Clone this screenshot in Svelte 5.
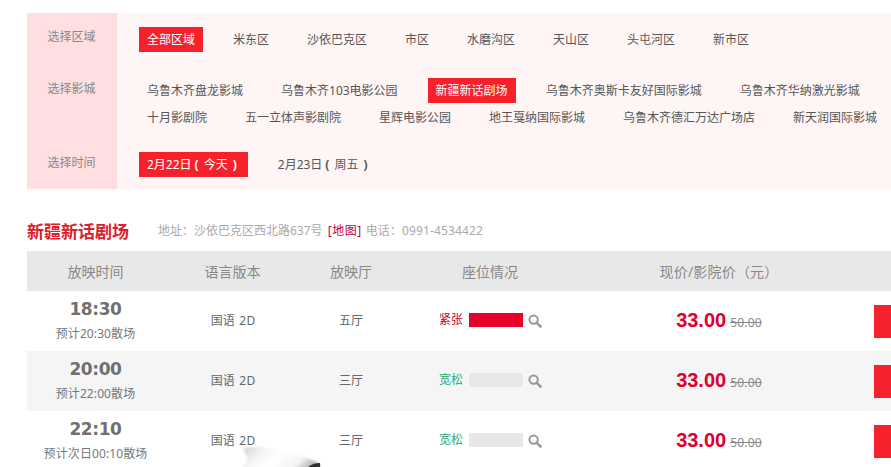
<script>
	const filters = [
		{
			label: "选择区域",
			items: ["全部区域", "米东区", "沙依巴克区", "市区", "水磨沟区", "天山区", "头屯河区", "新市区"],
			active: 0
		},
		{
			label: "选择影城",
			items: [
				"乌鲁木齐盘龙影城",
				"乌鲁木齐103电影公园",
				"新疆新话剧场",
				"乌鲁木齐奥斯卡友好国际影城",
				"乌鲁木齐华纳激光影城",
				"十月影剧院",
				"五一立体声影剧院",
				"星辉电影公园",
				"地王戛纳国际影城",
				"乌鲁木齐德汇万达广场店",
				"新天润国际影城"
			],
			active: 2
		}
	];

	const dates = [
		{ date: "2月22日", day: "今天" },
		{ date: "2月23日", day: "周五" }
	];

	const shows = [
		{ time: "18:30", end: "预计20:30散场", hall: "五厅", busy: true },
		{ time: "20:00", end: "预计22:00散场", hall: "三厅", busy: false },
		{ time: "22:10", end: "预计次日00:10散场", hall: "三厅", busy: false }
	];
</script>

<div class="page">
	<section class="filter">
		{#each filters as group}
			<div class="group">
				<div class="label">{group.label}</div>
				<ul class="items">
					{#each group.items as item, i}
						<li class:active={i === group.active}>{item}</li>
					{/each}
				</ul>
			</div>
		{/each}
		<div class="group">
			<div class="label">选择时间</div>
			<ul class="items">
				{#each dates as d, i}
					<li class="date" class:active={i === 0}>{d.date}<b class="open">(</b>{d.day}<b class="close">)</b></li>
				{/each}
			</ul>
		</div>
	</section>

	<header class="cinema">
		<h2>新疆新话剧场</h2>
		<p>地址：沙依巴克区西北路637号 <a href="#map">[地图]</a> <span class="tel">电话：0991-4534422</span></p>
	</header>

	<div class="table">
		<div class="row head">
			<div>放映时间</div>
			<div>语言版本</div>
			<div>放映厅</div>
			<div>座位情况</div>
			<div class="price-head">现价/影院价（元）</div>
			<div></div>
		</div>
		{#each shows as show}
			<div class="row">
				<div class="time">
					<strong>{show.time}</strong>
					<span>{show.end}</span>
				</div>
				<div class="lang">国语 2D</div>
				<div class="hall">{show.hall}</div>
				<div class="seats">
					<span class="state" class:busy={show.busy}>{show.busy ? "紧张" : "宽松"}</span>
					<span class="bar" class:busy={show.busy}></span>
					<svg width="14" height="14" viewBox="0 0 14 14" aria-hidden="true">
						<circle cx="5.6" cy="5.6" r="4.2" fill="none" stroke="#999" stroke-width="2" />
						<path d="M8.8 8.8 L12.6 12.6" stroke="#999" stroke-width="2.6" stroke-linecap="round" />
					</svg>
				</div>
				<div class="price">
					<b>33.00</b>
					<s>50.00</s>
				</div>
				<div class="buy"><span></span></div>
			</div>
		{/each}
	</div>

	<svg class="mascot" width="84" height="24" viewBox="0 0 84 24" aria-hidden="true">
		<defs>
			<linearGradient id="shade" x1="0" y1="0.3" x2="1" y2="0.6">
				<stop offset="0" stop-color="#d8d8d8" />
				<stop offset="0.22" stop-color="#f4f4f4" />
				<stop offset="0.45" stop-color="#ffffff" />
				<stop offset="0.78" stop-color="#f4f4f4" />
				<stop offset="1" stop-color="#a8a8a8" />
			</linearGradient>
			<filter id="soft" x="-5%" y="-20%" width="110%" height="140%">
				<feGaussianBlur stdDeviation="1" />
			</filter>
		</defs>
		<path d="M5 3 C12 1 26 2 38 5 C54 8 70 12 82 19 L82 24 L3 24 C7 20 10 16 9 13 C8 9 6 7 5 3 Z" fill="url(#shade)" filter="url(#soft)" />
		<path d="M69 23 C72 20 77 18 82 18 L82 24 L69 24 Z" fill="#2e2e2e" />
	</svg>
</div>

<style>
	:global(body) {
		margin: 0;
	}

	.page {
		position: relative;
		width: 891px;
		height: 467px;
		overflow: hidden;
		background: #fff;
		font-family: "Noto Sans", "Noto Sans CJK SC", sans-serif;
		font-size: 12px;
		color: #555;
	}

	.filter {
		margin: 13px 0 0 27px;
		background: #fff5f5;
	}

	.group {
		display: flex;
	}

	.group:nth-child(1) {
		height: 52px;
	}

	.group:nth-child(2) {
		height: 74px;
	}

	.group:nth-child(3) {
		height: 50px;
	}

	.label {
		width: 89px;
		flex: none;
		padding: 11px 1px 0 0;
		line-height: 25px;
		text-align: center;
		background: #ffdfdf;
		color: #888;
	}

	.items {
		display: flex;
		flex-wrap: wrap;
		align-content: flex-start;
		gap: 2px 22px;
		width: 752px;
		margin: 0;
		padding: 14px 0 0 22px;
		list-style: none;
	}

	.group:nth-child(n + 2) .items {
		padding-top: 13px;
	}

	.items li {
		padding: 0 8px;
		line-height: 25px;
		height: 25px;
		white-space: nowrap;
	}

	.items li.date {
		padding-right: 11px;
	}

	.date .open {
		margin: 0 5px 0 3px;
	}

	.date .close {
		margin-left: 5px;
	}

	.items li.active {
		background: #f5222d;
		color: #fff;
	}

	.cinema {
		display: flex;
		align-items: center;
		height: 34px;
		margin: 24px 0 0 27px;
	}

	.cinema h2 {
		width: 131px;
		margin: 0;
		font-size: 17px;
		font-weight: 700;
		color: #d9202c;
	}

	.cinema p {
		margin: 0;
		color: #aaa;
	}

	.cinema a {
		margin: 0 1px 0 2px;
		letter-spacing: 0.5px;
		color: #c4003a;
		text-decoration: none;
	}

	.tel {
		letter-spacing: 0.12px;
	}

	.table {
		margin: 4px 0 0 27px;
		width: 1000px;
	}

	.row {
		display: grid;
		grid-template-columns: 137px 137px 100px 178px 274px 1fr;
		align-items: center;
		height: 60px;
		text-align: center;
		color: #666;
	}

	.row:nth-child(odd) {
		background: #f5f5f5;
	}

	.row.head,
	.row.head:nth-child(odd) {
		height: 40px;
		background: #e8e8e8;
		font-size: 14px;
		color: #888;
	}

	.price-head {
		padding-left: 6px;
		letter-spacing: 0.2px;
	}

	.time {
		display: flex;
		flex-direction: column;
		gap: 4px;
		color: #777;
	}

	.time strong {
		font-family: "DejaVu Sans", sans-serif;
		font-size: 17px;
		line-height: 22px;
		letter-spacing: -0.4px;
		color: #707070;
	}

	.time span {
		line-height: 20px;
		letter-spacing: 0.1px;
	}

	.lang {
		padding: 0 0 2px 1px;
		word-spacing: 1px;
		letter-spacing: 0.2px;
	}

	.hall {
		padding-bottom: 2px;
	}

	.seats {
		display: flex;
		align-items: center;
		padding-left: 38px;
	}

	.state {
		width: 30px;
		text-align: left;
		color: #2aa876;
		transform: translateY(-2px);
	}

	.state.busy {
		color: #c00033;
	}

	.bar {
		width: 54px;
		height: 14px;
		background: #e8e8e8;
		transform: translateY(-1px);
	}

	.bar.busy {
		background: #e6002a;
	}

	.seats svg {
		margin-left: 5px;
	}

	.price {
		display: flex;
		align-items: baseline;
		justify-content: center;
		gap: 4px;
		padding: 0 0 2px 6px;
	}

	.price b {
		font-family: "Liberation Sans", sans-serif;
		font-size: 20px;
		color: #dd0030;
	}

	.price s {
		letter-spacing: 0.2px;
		color: #888;
	}

	.buy {
		display: flex;
		padding-left: 21px;
	}

	.buy span {
		width: 100px;
		height: 33px;
		background: #f5222d;
	}

	.mascot {
		position: absolute;
		left: 238px;
		top: 445px;
	}
</style>
